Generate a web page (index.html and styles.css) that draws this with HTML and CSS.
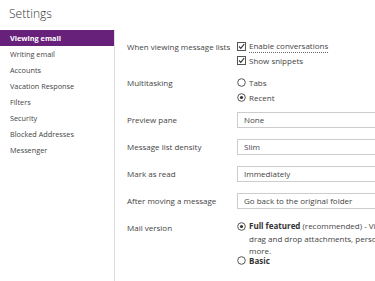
FILE: index.html
```html
<!DOCTYPE html>
<html lang="en">
<head>
    <meta charset="UTF-8">
    <meta name="viewport" content="width=device-width, initial-scale=1.0">
    <title>Settings</title>
    <link rel="stylesheet" href="styles.css">
</head>
<body>
    <h1 class="page-title">Settings</h1>
    <div class="layout">
        <nav class="side-nav">
            <a class="nav-item active">Viewing email</a>
            <a class="nav-item">Writing email</a>
            <a class="nav-item">Accounts</a>
            <a class="nav-item">Vacation Response</a>
            <a class="nav-item">Filters</a>
            <a class="nav-item">Security</a>
            <a class="nav-item">Blocked Addresses</a>
            <a class="nav-item">Messenger</a>
        </nav>

        <main class="options">
            <div class="option-row compact">
                <div class="option-label">When viewing message lists</div>
                <div class="option-control">
                    <label class="choice">
                        <svg class="mark" width="9" height="9" viewBox="0 0 9 9"><rect x="0.5" y="0.5" width="8" height="8" fill="none" stroke="#555"/><path d="M2 4.5 L3.8 6.4 L7.2 2.2" fill="none" stroke="#333" stroke-width="1.1"/></svg>
                        <span class="dotted">Enable conversations</span>
                    </label>
                    <label class="choice">
                        <svg class="mark" width="9" height="9" viewBox="0 0 9 9"><rect x="0.5" y="0.5" width="8" height="8" fill="none" stroke="#555"/><path d="M2 4.5 L3.8 6.4 L7.2 2.2" fill="none" stroke="#333" stroke-width="1.1"/></svg>
                        <span>Show snippets</span>
                    </label>
                </div>
            </div>

            <div class="option-row compact">
                <div class="option-label">Multitasking</div>
                <div class="option-control">
                    <label class="choice">
                        <svg class="mark" width="9" height="9" viewBox="0 0 9 9"><circle cx="4.5" cy="4.5" r="3.8" fill="none" stroke="#555"/></svg>
                        <span>Tabs</span>
                    </label>
                    <label class="choice">
                        <svg class="mark" width="9" height="9" viewBox="0 0 9 9"><circle cx="4.5" cy="4.5" r="3.8" fill="none" stroke="#555"/><circle cx="4.5" cy="4.5" r="1.6" fill="#333"/></svg>
                        <span>Recent</span>
                    </label>
                </div>
            </div>

            <div class="option-row">
                <div class="option-label">Preview pane</div>
                <div class="option-control">
                    <div class="select-box">None</div>
                </div>
            </div>

            <div class="option-row">
                <div class="option-label">Message list density</div>
                <div class="option-control">
                    <div class="select-box">Slim</div>
                </div>
            </div>

            <div class="option-row">
                <div class="option-label">Mark as read</div>
                <div class="option-control">
                    <div class="select-box">Immediately</div>
                </div>
            </div>

            <div class="option-row">
                <div class="option-label">After moving a message</div>
                <div class="option-control">
                    <div class="select-box">Go back to the original folder</div>
                </div>
            </div>

            <div class="option-row">
                <div class="option-label">Mail version</div>
                <div class="option-control">
                    <label class="choice version">
                        <svg class="mark" width="9" height="9" viewBox="0 0 9 9"><circle cx="4.5" cy="4.5" r="3.8" fill="none" stroke="#555"/><circle cx="4.5" cy="4.5" r="1.6" fill="#333"/></svg>
                        <span><b>Full featured</b> (recommended) - View messages in the reading pane,<br>drag and drop attachments, personalize with themes, and much<br>more.</span>
                    </label>
                    <label class="choice">
                        <svg class="mark" width="9" height="9" viewBox="0 0 9 9"><circle cx="4.5" cy="4.5" r="3.8" fill="none" stroke="#555"/></svg>
                        <span><b>Basic</b></span>
                    </label>
                </div>
            </div>
        </main>
    </div>
</body>
</html>
```

FILE: styles.css
```css
body {
    margin: 0;
    font-family: "Open Sans", "Noto Sans", sans-serif;
    font-size: 8px;
    color: #444;
    background-color: #fff;
    overflow: hidden;
    height: 100vh;
}

.page-title {
    margin: 0;
    height: 30px;
    padding-left: 9px;
    font-size: 12px;
    font-weight: 300;
    line-height: 28px;
    color: #333;
}

.layout {
    display: flex;
    height: calc(100vh - 30px);
}

.side-nav {
    width: 114px;
    flex-shrink: 0;
    border-right: 1px solid #ddd;
}

.nav-item {
    display: block;
    height: 16px;
    line-height: 16px;
    padding-left: 10px;
    font-size: 7.3px;
    color: #444;
}

.nav-item.active {
    background-color: #68217a;
    color: #fff;
    font-weight: bold;
}

.options {
    width: 420px;
    flex-shrink: 0;
    padding: 9px 0 0 12px;
}

.option-row {
    display: flex;
    margin-bottom: 11px;
}

.option-row.compact {
    margin-bottom: 7px;
}

.option-label {
    width: 110px;
    flex-shrink: 0;
    line-height: 16px;
}

.option-control {
    flex: 1;
}

.choice {
    display: flex;
    align-items: flex-start;
    gap: 3px;
    line-height: 15px;
}

.choice .mark {
    flex-shrink: 0;
    margin-top: 3px;
}

.choice.version {
    line-height: 12.5px;
    margin-bottom: -5px;
}

.choice.version .mark {
    margin-top: 2px;
}

.choice b {
    color: #333;
}

.dotted {
    border-bottom: 1px dotted #666;
    line-height: 12px;
    margin-top: 1px;
}

.select-box {
    width: 170px;
    height: 14px;
    line-height: 14px;
    padding: 0 6px;
    border: 1px solid #ccc;
    color: #444;
}
```
